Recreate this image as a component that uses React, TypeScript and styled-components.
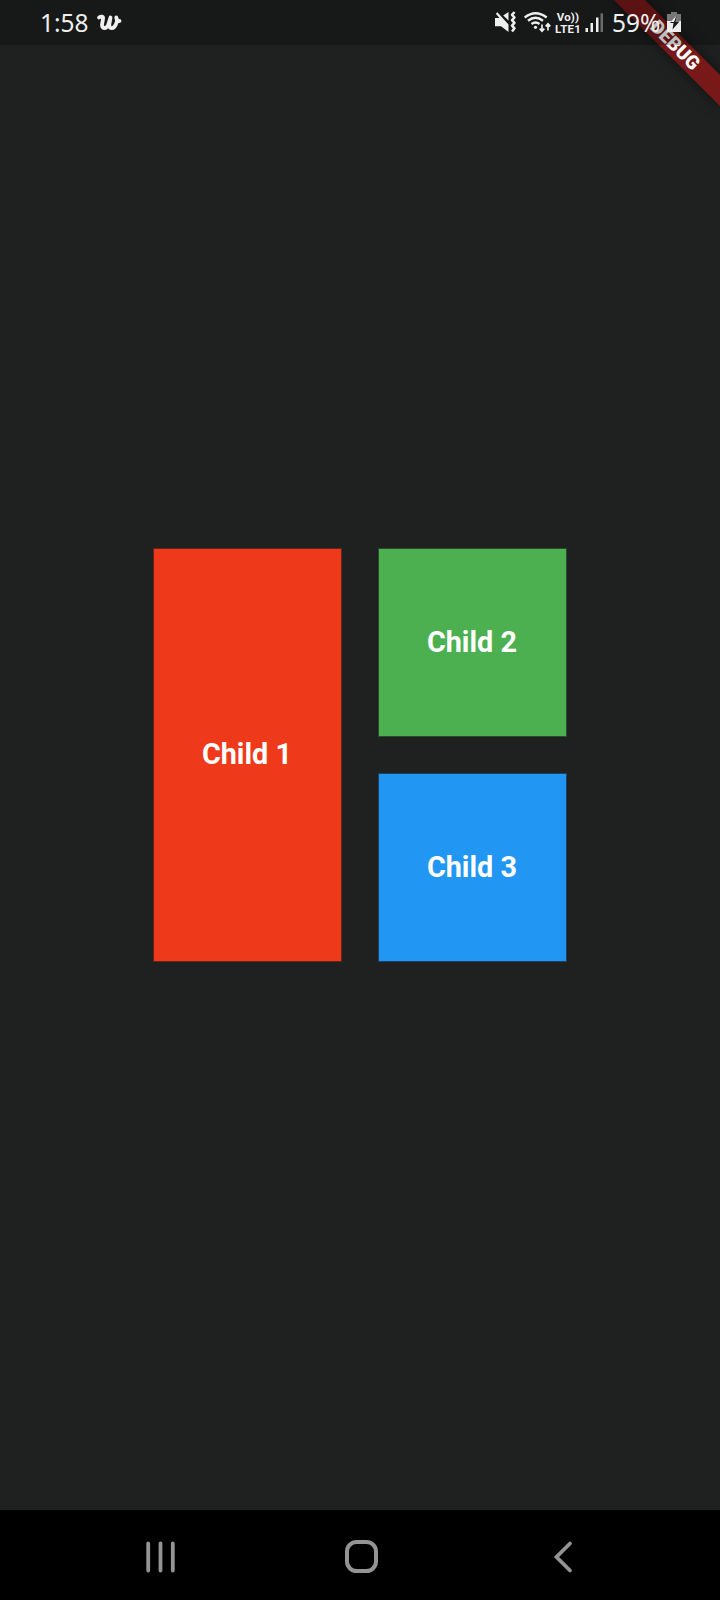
import React from "react";
import styled, { createGlobalStyle } from "styled-components";

const GlobalStyle = createGlobalStyle`
  * { box-sizing: border-box; }
  body { margin: 0; background: #1f2120; }
`;

const Screen = styled.div`
  position: relative;
  display: flex;
  flex-direction: column;
  width: 720px;
  height: 1600px;
  overflow: hidden;
  background: #1f2120;
  font-family: Roboto, sans-serif;
`;

const StatusBar = styled.header`
  position: relative;
  z-index: 2;
  display: flex;
  align-items: flex-start;
  justify-content: space-between;
  height: 45px;
  padding: 0 38px 0 40px;
  background: rgba(0, 0, 0, 0.25);
  color: #eeefee;
`;

const StatusGroup = styled.div`
  display: flex;
  align-items: flex-start;
`;

const StatusText = styled.span<{ $width: number }>`
  width: ${(p) => p.$width}px;
  font: 400 26px/44px "Noto Sans", sans-serif;
  white-space: nowrap;
  transform: scaleX(0.94);
  transform-origin: 0 0;
`;

const Icon = styled.svg`
  display: block;
  flex: none;
  overflow: visible;
`;

const Network = styled.div`
  display: flex;
  flex-direction: column;
  align-items: center;
  width: 28px;
  padding-top: 10.5px;
`;

const NetworkLine = styled.span`
  font: 700 11.5px/12px Roboto, sans-serif;
  letter-spacing: 0.2px;
  white-space: nowrap;
`;

const Body = styled.main`
  display: flex;
  flex: 1;
  align-items: flex-start;
  justify-content: center;
  padding-top: 503px;
  gap: 36px;
`;

const Column = styled.div`
  display: flex;
  flex-direction: column;
  gap: 36px;
`;

const Tile = styled.div<{ $fill: string; $edge: string; $tall?: boolean }>`
  display: flex;
  align-items: center;
  justify-content: center;
  width: 189px;
  height: ${(p) => (p.$tall ? 414 : 189)}px;
  padding: 0 1px 3px 0;
  border: 1px solid ${(p) => p.$edge};
  background: ${(p) => p.$fill};
`;

const TileLabel = styled.span`
  color: #fff;
  font-size: 30px;
  font-weight: 700;
  line-height: 35px;
  transform: scaleX(0.96);
`;

const NavBar = styled.nav`
  display: flex;
  align-items: center;
  height: 90px;
  padding: 3px 0 0 146px;
  background: #000;
`;

const NavIcon = styled(Icon)<{ $gap?: number }>`
  margin-right: ${(p) => p.$gap ?? 0}px;
`;

const DebugBanner = styled.div`
  position: absolute;
  z-index: 1;
  top: 0;
  left: 645px;
  width: 150px;
  height: 75px;
  padding-top: 52.5px;
  transform: rotate(45deg);
  transform-origin: 75px 0;
`;

const DebugRibbon = styled.div`
  height: 22.5px;
  background:
    linear-gradient(rgba(183, 28, 28, 0.627), rgba(183, 28, 28, 0.627)),
    rgba(0, 0, 0, 0.45);
  box-shadow: 0 0 14px rgba(0, 0, 0, 0.5);
  color: #fff;
  font-size: 19.1px;
  font-weight: 900;
  line-height: 22.5px;
  text-align: center;
`;

export default function App() {
  return (
    <Screen>
      <GlobalStyle />
      <StatusBar>
        <StatusGroup>
          <StatusText $width={57}>1:58</StatusText>
          <Icon width="26" height="45" viewBox="0 0 26 45" fill="none" stroke="#eeefee" strokeLinecap="round" strokeLinejoin="round">
            <path d="M2 17.500C4 16.200 6.500 16.200 6 19L5 24.500C5 29 9 29 11 25.500L13.500 17.500L12.300 24.500C12 29.500 17 29 18.800 24.500C20.300 21.500 20.200 19 19.300 17.500C19.500 20.500 21 21.500 22.500 21" strokeWidth="3.800" />
          </Icon>
        </StatusGroup>
        <StatusGroup>
          <Icon width="29" height="45" viewBox="495 0 29 45" fill="#eeefee">
            <path d="M495 18h4.500l-3.700-4.200 1.600-1.600L508.500 24.500V32L501 26.300h-6z" />
            <path d="M508.500 12v8.500l-5.300-5z" />
            <path d="M514.500 12l-2.500 2.800 2.500 2.700-2.500 2.700 2.500 2.700-2.500 2.700 2.500 2.700-2.500 3.200" fill="none" stroke="#eeefee" strokeWidth="2.500" strokeLinejoin="round" />
          </Icon>
          <Icon width="30" height="45" viewBox="524 0 30 45" fill="none" stroke="#eeefee">
            <path d="M524.700 17.500Q535.500 8.800 546.700 17.500M528 20.800Q535.500 14.800 543 20.800M531.500 24Q535.500 20.800 539.500 24" strokeWidth="2.400" />
            <circle cx="535.500" cy="27.300" r="1.600" fill="#eeefee" stroke="none" />
            <path d="M542 24.500v6.500M539.700 28.700L542 31.200L544.300 28.700M548 30.500V24M545.700 26.300L548 23.800L550.300 26.300" strokeWidth="1.700" />
          </Icon>
          <Network>
            <NetworkLine>Vo))</NetworkLine>
            <NetworkLine>LTE1</NetworkLine>
          </Network>
          <Icon width="30" height="45" viewBox="582 0 30 45" fill="#eeefee">
            <path d="M585.500 28h2.500v4h-2.500zM590.500 23h2.500v9h-2.500zM596 17.500h2.500v14.500h-2.500z" />
            <path d="M600.500 13.300h2.500v18.700h-2.500z" fill="#6b6c6b" />
          </Icon>
          <StatusText $width={54}>59%</StatusText>
          <Icon width="16" height="45" viewBox="666 0 16 45">
            <path d="M671 12h6v2h4v7h-14v-7h4z" fill="#777" />
            <path d="M667 21h14v11h-14z" fill="#eee" />
            <path d="M676.500 15.500l-6.500 7.500h3.500l-1 6.500 7-8h-4z" fill="#191b1a" />
            <path d="M676.500 15.500l-6 6.500h3.500z" fill="#eee" />
          </Icon>
        </StatusGroup>
      </StatusBar>
      <Body>
        <Tile $tall $fill="#ee391a" $edge="#672318">
          <TileLabel>Child 1</TileLabel>
        </Tile>
        <Column>
          <Tile $fill="#4db050" $edge="#284b29">
            <TileLabel>Child 2</TileLabel>
          </Tile>
          <Tile $fill="#2296f3" $edge="#1d4263">
            <TileLabel>Child 3</TileLabel>
          </Tile>
        </Column>
      </Body>
      <NavBar>
        <NavIcon $gap={169} width="30" height="32" viewBox="0 0 30 32" fill="none" stroke="#949494" strokeWidth="3.800" strokeLinecap="round">
          <path d="M2.200 2.500v27M14.500 2.500v27M26.800 2.500v27" />
        </NavIcon>
        <NavIcon $gap={176} width="33" height="33" viewBox="0 0 33 33" fill="none" stroke="#949494" strokeWidth="4">
          <rect x="2" y="2" width="29" height="29" rx="9.500" />
        </NavIcon>
        <NavIcon width="20" height="32" viewBox="0 0 20 32" fill="none" stroke="#949494" strokeWidth="3.800" strokeLinecap="round">
          <path d="M16 2.500L2.500 16L16 29.500" />
        </NavIcon>
      </NavBar>
      <DebugBanner>
        <DebugRibbon>DEBUG</DebugRibbon>
      </DebugBanner>
    </Screen>
  );
}
